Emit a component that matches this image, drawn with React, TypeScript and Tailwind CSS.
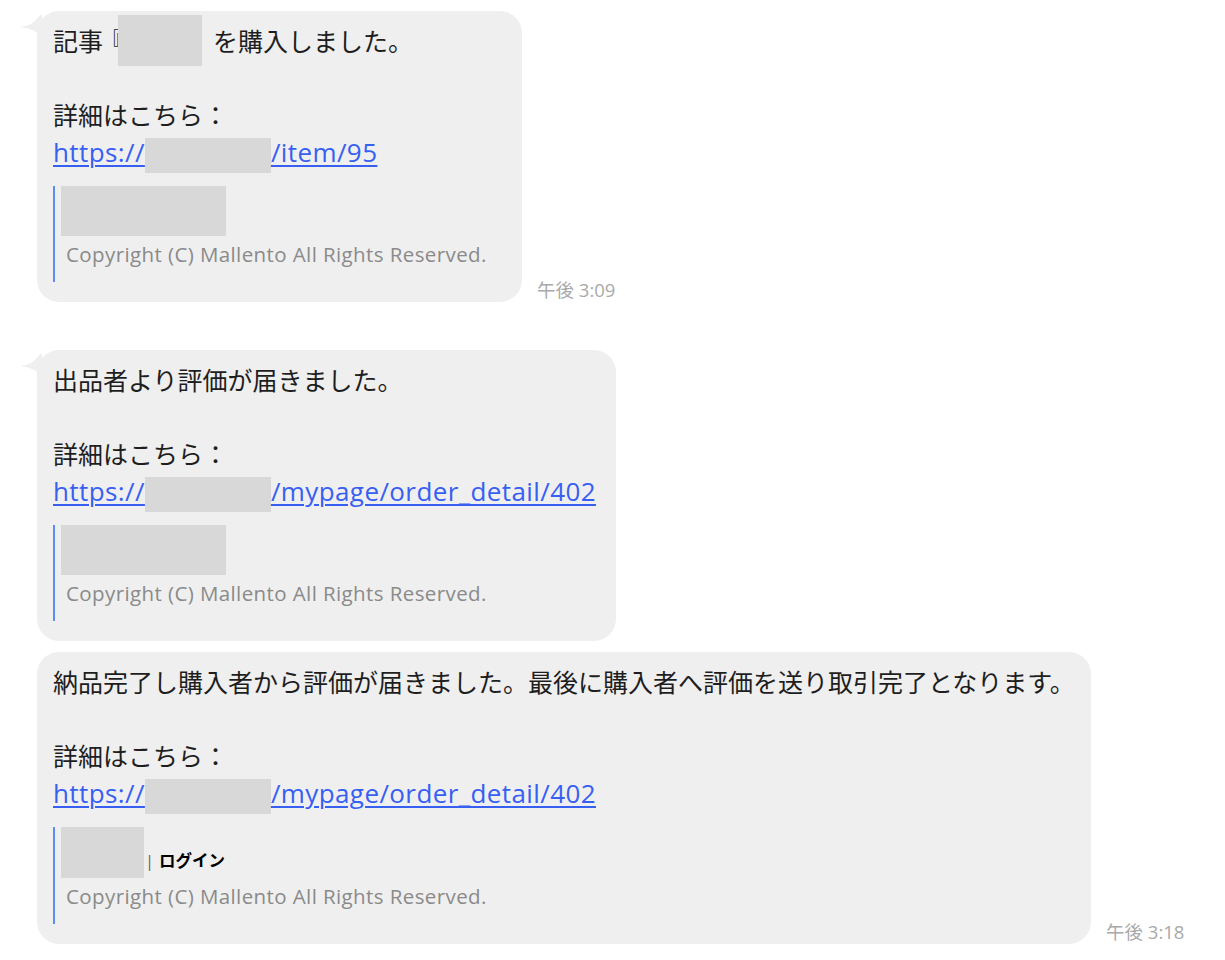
import type { ReactNode } from "react";

const FONT = {
	fontFamily: '"Open Sans", "Noto Sans CJK JP", sans-serif',
};

function Tail() {
	return (
		<svg
			className="absolute -left-[17px] top-[2px]"
			width="22"
			height="26"
			viewBox="0 0 22 26"
		>
			<path d="M0 14 Q12 14 20 2 L22 2 L22 26 Q18 16 0 14 Z" fill="#efefef" />
		</svg>
	);
}

function Redact({ className }: { className: string }) {
	return <span className={`inline-block bg-[#d8d8d8] align-middle ${className}`} />;
}

function Quote({ header }: { header: ReactNode }) {
	return (
		<div className="mt-[15px] border-l-2 border-[#5b8ef0] pl-[6px] pb-[15px]">
			{header}
			<div className="mt-[5px] pl-[5px] text-[20.5px] leading-[26px] tracking-[0.4px] text-[#8a8a8a]">
				Copyright (C) Mallento All Rights Reserved.
			</div>
		</div>
	);
}

function Link({ tail }: { tail: string }) {
	return (
		<div className="h-[37px]">
			<span className="text-[26px] tracking-[0.4px] text-[#3760f2] underline underline-offset-[3px] decoration-[1.5px]">
				https://
				<Redact className="-my-[4px] h-[35px] w-[126px]" />
				{tail}
			</span>
		</div>
	);
}

function Bubble({
	width,
	tail,
	children,
}: {
	width: string;
	tail?: boolean;
	children: ReactNode;
}) {
	return (
		<div
			className={`relative rounded-[22px] bg-[#efefef] pl-[16px] pr-[20px] pt-[12px] pb-[20px] text-[25px] leading-[37px] text-[#1e1e1e] ${width}`}
		>
			{tail && <Tail />}
			{children}
		</div>
	);
}

function Time({ text }: { text: string }) {
	return (
		<div className="mb-[1px] text-[18.5px] leading-[22px] text-[#a9a9a9]">{text}</div>
	);
}

export default function App() {
	return (
		<div className="min-h-[960px] bg-white pl-[37px] pt-[11px]" style={FONT}>
			<div className="flex items-end gap-[15px]">
				<Bubble width="w-[485px]" tail>
					<div className="h-[37px] whitespace-nowrap">
						記事<span className="relative -left-[4px]">『</span>
						<Redact className="relative z-10 -my-[8px] -ml-[10px] -mr-[14px] -top-[4px] h-[51px] w-[84px]" />
						』を購入しました。
					</div>
					<div className="h-[37px]" />
					<div className="h-[37px]">詳細はこちら：</div>
					<Link tail="/item/95" />
					<Quote header={<div className="h-[50px] w-[165px] bg-[#d8d8d8]" />} />
				</Bubble>
				<Time text="午後 3:09" />
			</div>

			<div className="mt-[48px] flex items-end">
				<Bubble width="w-[579px]" tail>
					<div className="h-[37px]">出品者より評価が届きました。</div>
					<div className="h-[37px]" />
					<div className="h-[37px]">詳細はこちら：</div>
					<Link tail="/mypage/order_detail/402" />
					<Quote header={<div className="h-[50px] w-[165px] bg-[#d8d8d8]" />} />
				</Bubble>
			</div>

			<div className="mt-[11px] flex items-end gap-[15px]">
				<Bubble width="w-[1054px]">
					<div className="h-[37px] whitespace-nowrap">
						納品完了し購入者から評価が届きました。最後に購入者へ評価を送り取引完了となります。
					</div>
					<div className="h-[37px]" />
					<div className="h-[37px]">詳細はこちら：</div>
					<Link tail="/mypage/order_detail/402" />
					<Quote
						header={
							<div className="flex items-end">
								<div className="h-[51px] w-[83px] bg-[#d8d8d8]" />
								<div className="pb-[4px] text-[16.5px] leading-[26px]">
									<span className="ml-[1px] mr-[5px] text-[#666]">|</span>
									<span className="font-bold text-black">ログイン</span>
								</div>
							</div>
						}
					/>
				</Bubble>
				<Time text="午後 3:18" />
			</div>
		</div>
	);
}
